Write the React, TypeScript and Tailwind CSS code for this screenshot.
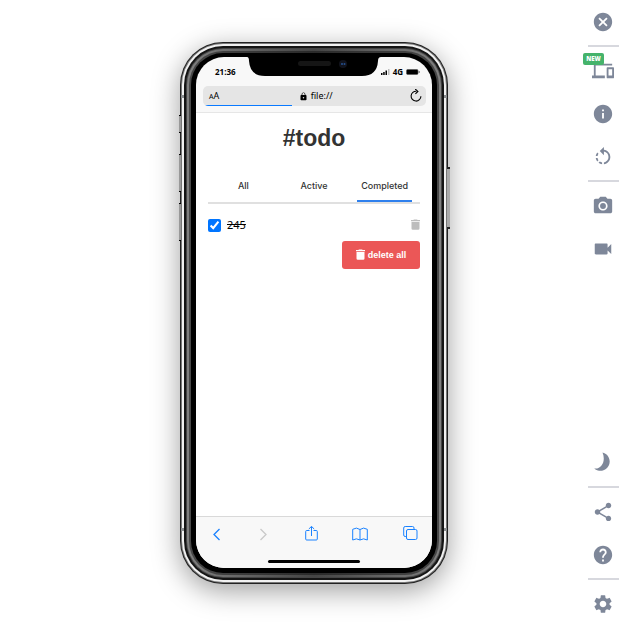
import React from "react";
import {
  MdCameraAlt,
  MdCancel,
  MdDevices,
  MdHelp,
  MdInfo,
  MdLock,
  MdRotateLeft,
  MdSettings,
  MdShare,
  MdVideocam,
} from "react-icons/md";

const noto = "font-['Noto_Sans',sans-serif]";
const openSans = "font-['Open_Sans',sans-serif]";

function StatusBar() {
  return (
    <div className={`relative flex h-[26px] items-center justify-between pr-3 pl-[19px] pt-1 ${openSans}`}>
      <span className="text-[8px] leading-3 font-bold text-black">21:36</span>
      <svg
        className="absolute top-0 left-1/2 h-[19px] w-[134px] -translate-x-1/2"
        viewBox="0 0 134 19"
        aria-hidden="true"
      >
        <path d="M0 0 Q2 0 2 4 Q3 19 18 19 H115 Q130 19 131 4 Q131 0 134 0Z" fill="#000" />
        <rect x="51" y="4" width="33" height="5" rx="2.5" fill="#151515" />
        <circle cx="96" cy="7" r="4" fill="#11131c" />
        <circle cx="95" cy="7" r="1" fill="#24508f" />
        <circle cx="97.500" cy="7" r="1" fill="#24508f" />
      </svg>
      <div className="flex items-center gap-[3px]">
        <svg width="9" height="6" viewBox="0 0 9 6" aria-hidden="true">
          <path d="M0 4h1.500v2H0zM2.200 3h1.500v3H2.200zM4.500 1.500H6V6H4.500z" fill="#000" />
          <path d="M7 0h1.500v6H7z" fill="#bbb" />
        </svg>
        <span className="text-[8px] leading-3 font-bold text-black">4G</span>
        <svg width="14" height="6" viewBox="0 0 14 6" aria-hidden="true">
          <rect x="0.500" y="0.500" width="11.500" height="5" rx="1.200" fill="#000" stroke="#555" strokeWidth="0.600" />
          <rect x="12.600" y="2" width="1" height="2" rx="0.500" fill="#555" />
        </svg>
      </div>
    </div>
  );
}

function AddressBar() {
  return (
    <div
      className={`relative mr-1.5 ml-[7px] mt-[3px] mb-1.5 flex h-5 items-center justify-between overflow-hidden rounded-[5px] bg-[#e5e5e5] pt-px pr-1 pl-1.5 text-black ${noto}`}
    >
      <button type="button" aria-label="Text size" className="flex items-baseline leading-3">
        <span className="text-[7px]">A</span>
        <span className="text-[9px]">A</span>
      </button>
      <span className="flex items-center gap-[3px] pl-[2px] text-[9px] leading-3">
        <MdLock size={9} aria-hidden="true" />
        file://
      </span>
      <button type="button" aria-label="Reload">
        <svg width="12" height="14" viewBox="0 0 12 14" fill="none" stroke="#000" strokeWidth="1.100" aria-hidden="true">
          <path d="M6.500 2.300A4.900 4.900 0 1 0 10.900 7.200" />
          <path d="M5.200 0 7.900 2.400 5.400 4.900" />
        </svg>
      </button>
      <div className="absolute bottom-0 left-[2px] h-px w-[87px] bg-[#0a7aff]" />
    </div>
  );
}

function TodoPage() {
  const tab = "mx-2 flex h-[33px] flex-1 items-center justify-center border-b-2 pt-1 text-[9px] leading-3 font-medium text-[#333] font-['Inter',sans-serif]";
  return (
    <main className="flex-1 bg-white px-3 font-['Liberation_Sans',Arial,sans-serif]">
      <h1 className="pt-[11px] text-center text-[23px] leading-7 font-bold text-[#333]">#todo</h1>
      <nav className="mt-[17px] flex border-b-2 border-[#e0e0e0]">
        <button type="button" className={`${tab} border-transparent`}>All</button>
        <button type="button" className={`${tab} border-transparent`}>Active</button>
        <button type="button" className={`${tab} border-[#2f80ed]`}>Completed</button>
      </nav>
      <div className="mt-[15px] flex h-[13px] items-center justify-between">
        <label className={`flex items-center gap-1.5 text-[11px] leading-3 text-black line-through ${noto}`}>
          <input type="checkbox" defaultChecked className="size-[13px] accent-[#0075ff]" />
          245
        </label>
        <button type="button" aria-label="Delete" className="text-[#bdbdbd]">
          <TrashIcon />
        </button>
      </div>
      <button
        type="button"
        className="mt-[9px] ml-auto flex h-7 w-[78px] items-center justify-center gap-[3px] rounded-[3px] bg-[#eb5757] text-[9px] leading-3 font-bold text-white"
      >
        <TrashIcon />
        delete all
      </button>
    </main>
  );
}

function TrashIcon() {
  return (
    <svg width="9" height="12" viewBox="0.5 0 9 12" fill="currentColor" aria-hidden="true">
      <path d="M1 3h8V9.500a1.300 1.300 0 0 1-1.300 1.300H2.300A1.300 1.300 0 0 1 1 9.500zM0.500 1h2.300L3.500 0.400h3l0.700 0.600h2.300v1.200h-9z" />
    </svg>
  );
}

function BrowserToolbar() {
  return (
    <footer className="border-t border-[#d9d9d9] bg-[#f8f8f8]">
      <div className="flex h-[34px] items-center justify-between pr-[14px] pl-[15px] text-[#1a82ff]">
        <button type="button" aria-label="Back">
          <svg width="12" height="14" viewBox="0 0 12 14" fill="none" stroke="currentColor" strokeWidth="1.300">
            <path d="M8.500 2 3 7.500 8.500 13" />
          </svg>
        </button>
        <button type="button" aria-label="Forward" className="text-[#c9c9c9]">
          <svg width="12" height="14" viewBox="0 0 12 14" fill="none" stroke="currentColor" strokeWidth="1.300">
            <path d="M2.500 2 8 7.500 2.500 13" />
          </svg>
        </button>
        <button type="button" aria-label="Share">
          <svg width="13" height="16" viewBox="0 0 13 16" fill="none" stroke="currentColor">
            <path d="M4.500 4.500H1.700a1 1 0 0 0-1 1V13a1 1 0 0 0 1 1h9.600a1 1 0 0 0 1-1V5.500a1 1 0 0 0-1-1H8.500M6.500 10V0.500M3.800 3 6.500 0.400 9.200 3" />
          </svg>
        </button>
        <button type="button" aria-label="Bookmarks">
          <svg width="16" height="14" viewBox="0 0 16 14" fill="none" stroke="currentColor">
            <path d="M8 2.500Q4.500-0.200 0.700 2.300V13Q4.500 10.700 8 13Q11.500 10.700 15.300 13V2.300Q11.500-0.200 8 2.500ZM8 2.500V13" />
          </svg>
        </button>
        <button type="button" aria-label="Tabs">
          <svg width="15" height="15" viewBox="0 0 15 15" fill="none" stroke="currentColor">
            <rect x="3.500" y="3.500" width="10.500" height="10" rx="1.500" />
            <path d="M3.500 10.500H2.200A1.500 1.500 0 0 1 0.700 9V2A1.500 1.500 0 0 1 2.200 0.500H9.500A1.500 1.500 0 0 1 11 2V3.500" />
          </svg>
        </button>
      </div>
      <div className="mx-auto mt-[9px] mb-[5px] h-[3px] w-[92px] rounded-full bg-black" />
    </footer>
  );
}

function Phone() {
  return (
    <div className="relative w-[268px] rounded-[43px] bg-[#222] p-px shadow-[0_7px_28px_rgba(0,0,0,0.38)]">
      <div className="absolute top-[73px] -left-px h-[18px] w-[2px] border-y border-black bg-[#999]" />
      <div className="absolute top-[112px] -left-px h-[38px] w-[2px] border-y border-black bg-[#999]" />
      <div className="absolute top-[161px] -left-px h-[38px] w-[2px] border-y border-black bg-[#999]" />
      <div className="absolute top-[125px] -right-[2px] h-[62px] w-[3px] border-y-2 border-[#222] bg-[#aaa]" />
      <div className="rounded-[42px] bg-[#777] p-px">
        <div className="rounded-[41px] bg-[#f1f1f1] p-[2px]">
          <div className="rounded-[39px] bg-[#141414] p-[2px]">
            <div className="rounded-[37px] bg-[#444] p-px">
              <div className="rounded-[36px] bg-linear-to-r from-[#808080] via-[#444] to-[#808080] p-[2px]">
                <div className="rounded-[34px] bg-linear-to-r from-[#484848] via-[#2a2a2a] to-[#484848] p-[2px]">
                  <div className="rounded-[32px] bg-black px-[5px] pt-1 pb-[5px]">
                    <div className="flex min-h-[511px] flex-col overflow-hidden rounded-[28px] bg-[#f8f8f8]">
                      <header className="border-b border-[#e6e6e6]">
                        <StatusBar />
                        <AddressBar />
                      </header>
                      <TodoPage />
                      <BrowserToolbar />
                    </div>
                  </div>
                </div>
              </div>
            </div>
          </div>
        </div>
      </div>
      <div className="absolute top-[53px] left-px h-[3px] w-[3px] bg-[#8d9092]" />
      <div className="absolute top-[53px] right-px h-[3px] w-[3px] bg-[#8d9092]" />
      <div className="absolute bottom-[53px] left-px h-[3px] w-[3px] bg-[#8d9092]" />
      <div className="absolute right-px bottom-[53px] h-[3px] w-[3px] bg-[#8d9092]" />
    </div>
  );
}

function Divider() {
  return <hr className="-mr-px mt-3 mb-[13px] w-[31px] border-t-2 border-[#d7d8de]" />;
}

function SideTools() {
  return (
    <aside className="mr-[7px] flex w-[30px] flex-col items-center justify-self-end pt-[11px] pb-2.5 text-[#7e8799]">
      <button type="button" aria-label="Close"><MdCancel size={22} /></button>
      <Divider />
      <button type="button" aria-label="Devices" className="relative">
        <MdDevices size={22} />
        <span
          className={`absolute -top-[7px] -left-[9px] h-3 w-[21px] rounded-[2px] bg-[#45b36b] text-center text-[6px] leading-3 font-extrabold text-white ${openSans}`}
        >
          NEW
        </span>
      </button>
      <button type="button" aria-label="Info" className="mt-[21px]"><MdInfo size={22} /></button>
      <button type="button" aria-label="Rotate" className="mt-[21px]"><MdRotateLeft size={22} /></button>
      <Divider />
      <button type="button" aria-label="Screenshot"><MdCameraAlt size={22} /></button>
      <button type="button" aria-label="Record" className="mt-[21px]"><MdVideocam size={22} /></button>
      <button type="button" aria-label="Dark mode" className="mt-auto">
        <svg width="22" height="22" viewBox="0 0 22 22" fill="currentColor">
          <path d="M10.500 0.500A9.300 9.300 0 1 1 2.200 16.500C10 17.500 14 8.500 10.500 0.500Z" />
        </svg>
      </button>
      <Divider />
      <button type="button" aria-label="Share"><MdShare size={22} /></button>
      <button type="button" aria-label="Help" className="mt-[21px]"><MdHelp size={22} /></button>
      <Divider />
      <button type="button" aria-label="Settings"><MdSettings size={22} /></button>
    </aside>
  );
}

export default function App() {
  return (
    <div className="grid min-h-screen grid-cols-[1fr_auto_1fr] bg-white pl-[3px] [&_button]:cursor-pointer [&_svg]:block">
      <div />
      <div className="self-center">
        <Phone />
      </div>
      <SideTools />
    </div>
  );
}
